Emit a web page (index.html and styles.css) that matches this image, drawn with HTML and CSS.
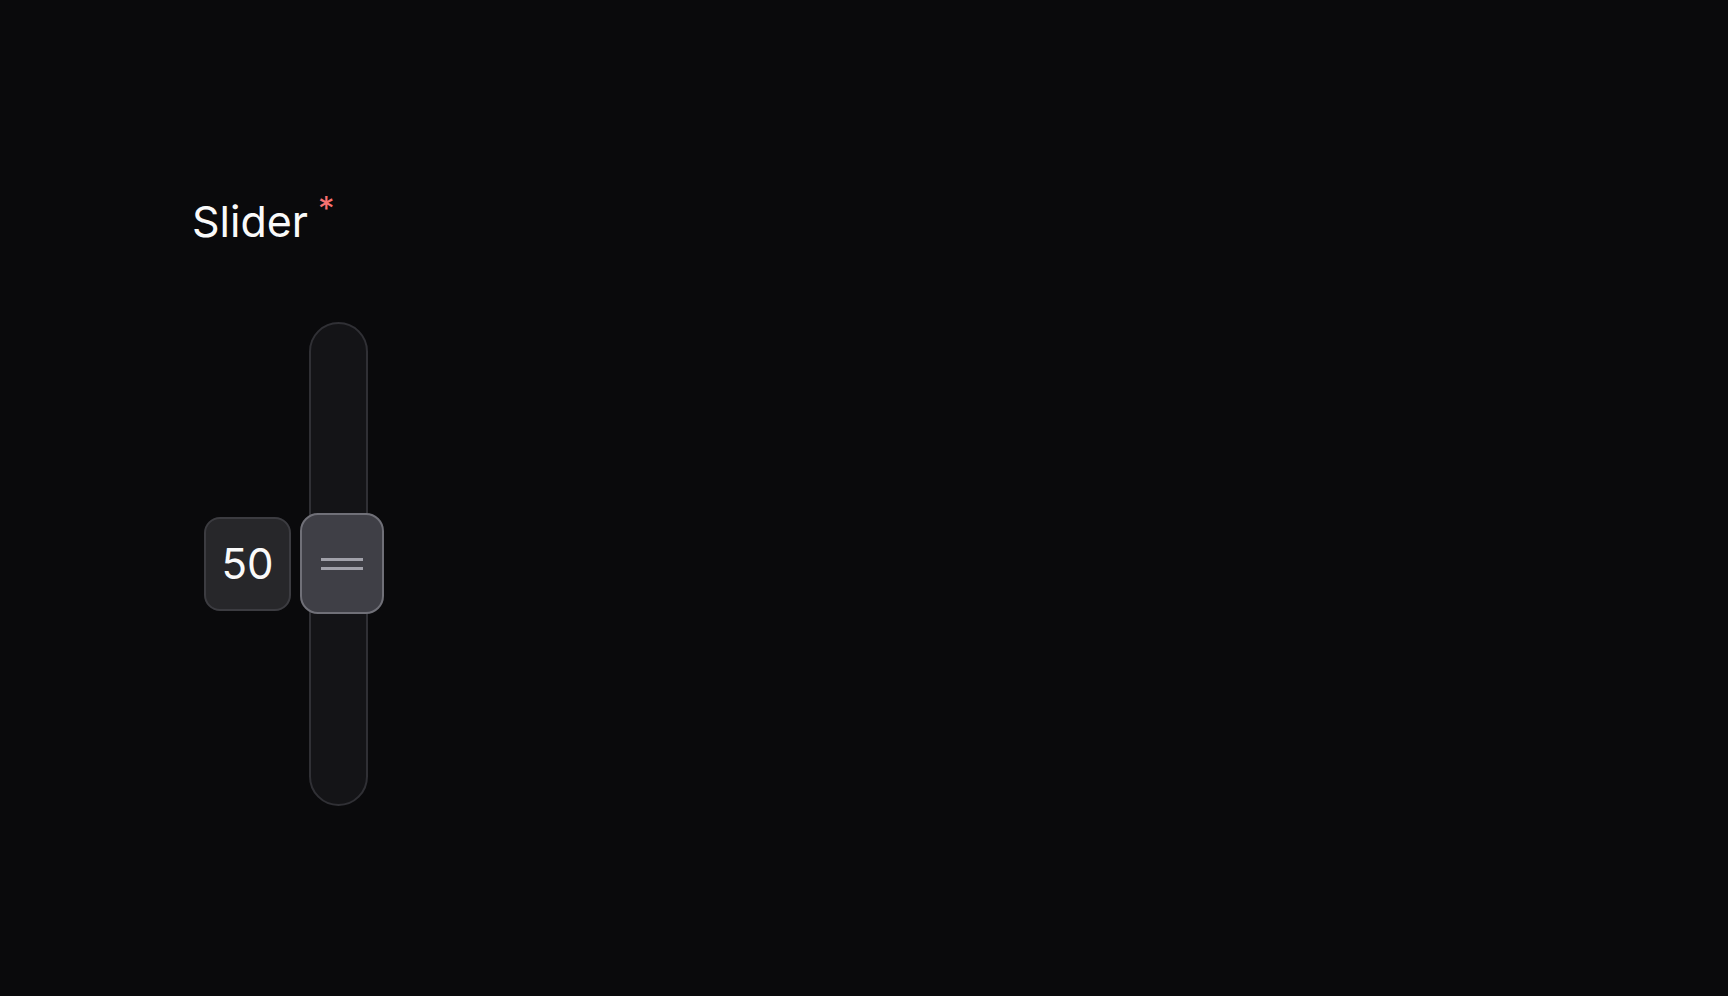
FILE: index.html
```html
<!DOCTYPE html>
<html lang="en">
<head>
<meta charset="utf-8">
<title>Slider</title>
<link rel="stylesheet" href="styles.css">
</head>
<body>
<main class="field">
  <div class="label">
    <span class="label-text">Slider</span>
    <span class="required">*</span>
  </div>
  <div class="control">
    <div class="value">50</div>
    <div class="slider">
      <div class="track"></div>
      <div class="thumb">
        <span class="grip"></span>
        <span class="grip"></span>
      </div>
    </div>
  </div>
</main>
</body>
</html>
```

FILE: styles.css
```css
html, body {
  margin: 0;
  padding: 0;
  background: #0a0a0c;
  height: 100%;
}
body {
  font-family: Inter, "Noto Sans", sans-serif;
  color: #fafafa;
}
.field {
  padding: 195px 0 0 192px;
  display: flex;
  flex-direction: column;
}
.label {
  display: flex;
  align-items: flex-start;
}
.label-text {
  font-size: 43px;
  line-height: 52px;
  font-weight: 400;
}
.required {
  font-size: 33px;
  line-height: 1;
  color: #f87171;
  margin-left: 10px;
  margin-top: -3px;
}
.control {
  margin-top: 75px;
  margin-left: 12px;
  display: flex;
  align-items: center;
  gap: 9px;
}
.value {
  box-sizing: border-box;
  width: 87px;
  height: 94px;
  border-radius: 16px;
  background: #27272a;
  border: 2px solid #3c3c41;
  display: flex;
  align-items: center;
  justify-content: center;
  font-size: 42px;
  line-height: 1;
}
.slider {
  position: relative;
  width: 84px;
  height: 484px;
}
.track {
  box-sizing: border-box;
  margin-left: 9px;
  width: 59px;
  height: 484px;
  border-radius: 30px;
  background: #141417;
  border: 2px solid #303035;
}
.thumb {
  position: absolute;
  left: 0;
  top: 191px;
  box-sizing: border-box;
  width: 84px;
  height: 101px;
  border-radius: 18px;
  background: #3f3f46;
  border: 2px solid #707078;
  display: flex;
  flex-direction: column;
  align-items: center;
  justify-content: center;
  gap: 6px;
}
.grip {
  display: block;
  width: 42px;
  height: 3px;
  background: #a1a1aa;
}
```
